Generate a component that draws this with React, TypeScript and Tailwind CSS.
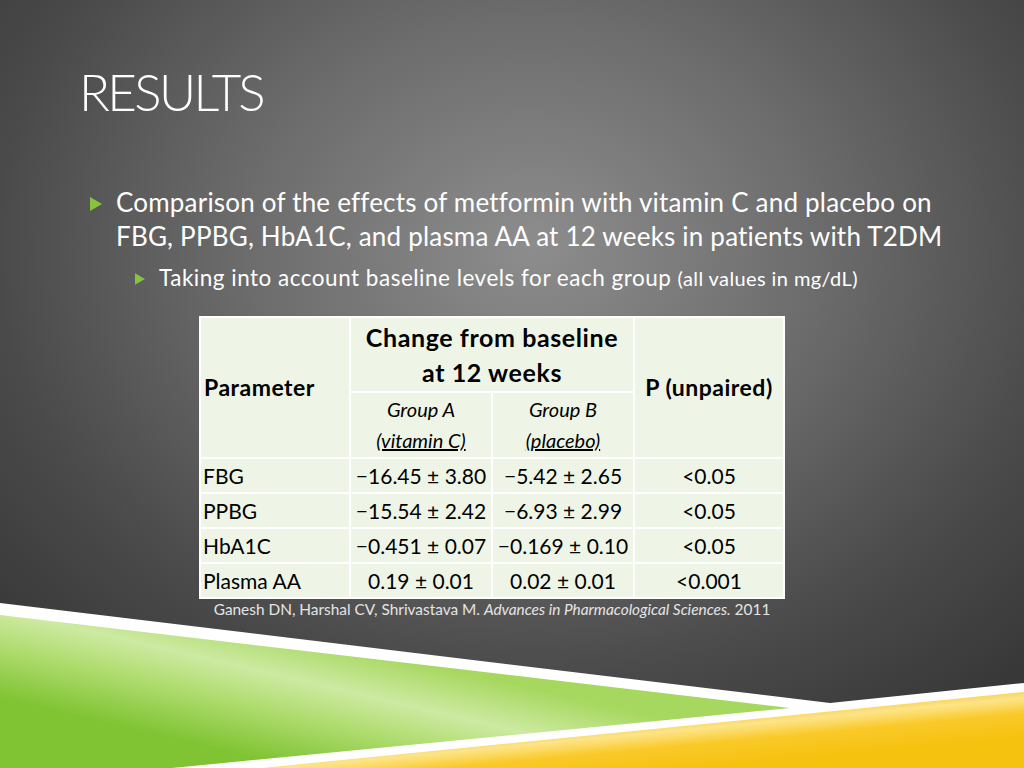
import React from 'react';

const font = { fontFamily: 'Lato, "Open Sans", sans-serif' };

const rows = [
  { name: 'FBG', a: '−16.45 ± 3.80', b: '−5.42 ± 2.65', p: '<0.05' },
  { name: 'PPBG', a: '−15.54 ± 2.42', b: '−6.93 ± 2.99', p: '<0.05' },
  { name: 'HbA1C', a: '−0.451 ± 0.07', b: '−0.169 ± 0.10', p: '<0.05' },
  { name: 'Plasma AA', a: '0.19 ± 0.01', b: '0.02 ± 0.01', p: '<0.001' },
];

const Arrow: React.FC<{ size: number }> = ({ size }) => (
  <svg width={size} height={size + 2} viewBox="0 0 12 14" className="shrink-0">
    <polygon points="0,0 12,7 0,14" fill="#86c440" />
  </svg>
);

// decorative stripes along the bottom edge
const BottomWaves: React.FC = () => (
  <svg className="absolute left-0 top-0 pointer-events-none" width="1024" height="768" viewBox="0 0 1024 768">
    <defs>
      <linearGradient id="green" gradientUnits="userSpaceOnUse" x1="330" y1="640" x2="300" y2="768">
        <stop offset="0" stopColor="#a6d75e" />
        <stop offset="0.35" stopColor="#cdeaa2" />
        <stop offset="0.6" stopColor="#b2dd73" />
        <stop offset="1" stopColor="#80c433" />
      </linearGradient>
      <linearGradient id="yellow" gradientUnits="userSpaceOnUse" x1="700" y1="715" x2="705" y2="768">
        <stop offset="0" stopColor="#f8c51f" />
        <stop offset="0.25" stopColor="#fde48a" />
        <stop offset="0.55" stopColor="#f9c928" />
        <stop offset="1" stopColor="#f6c210" />
      </linearGradient>
    </defs>
    <polygon points="0,603 830,703 1024,683 1024,768 0,768" fill="#ffffff" />
    <polygon points="0,615 790,708 172,768 0,768" fill="url(#green)" />
    <polygon points="262,768 1024,692 1024,768" fill="url(#yellow)" />
  </svg>
);

const cell = 'border-2 border-white';

const App: React.FC = () => {
  return (
    <div
      className="relative w-[1024px] h-[768px] overflow-hidden bg-[radial-gradient(ellipse_70%_75%_at_52%_32%,#8d8d8d_0%,#6c6c6c_40%,#4a4a4a_75%,#383838_100%)] text-white"
      style={font}
    >
      <BottomWaves />
      <div className="relative flex flex-col">
        <h1 className="ml-[79px] mt-[62px] text-[51px] leading-[60px] font-light tracking-[-2.6px]">RESULTS</h1>

        <div className="mt-[63px] ml-[90px] flex items-start gap-[14px]">
          <div className="mt-[12px]"><Arrow size={12} /></div>
          <p className="text-[26px] leading-[34px] tracking-[0.2px] whitespace-nowrap">
            Comparison of the effects of metformin with vitamin C and placebo on<br />
            FBG, PPBG, HbA1C, and plasma AA at 12 weeks in patients with T2DM
          </p>
        </div>

        <div className="mt-[10px] ml-[135px] flex items-start gap-[14px]">
          <div className="mt-[10px]"><Arrow size={10} /></div>
          <p className="text-[22.5px] leading-[30px] tracking-[0.5px] whitespace-nowrap">
            Taking into account baseline levels for each group <span className="text-[20px] tracking-[0.4px]">(all values in mg/dL)</span>
          </p>
        </div>

        <div className="ml-[200px] mt-[23px] w-[584px] flex flex-col items-center">
          <table className="w-[584px] border-collapse bg-[#eef5e7] text-black table-fixed">
            <colgroup>
              <col className="w-[150px]" />
              <col className="w-[142px]" />
              <col className="w-[142px]" />
              <col className="w-[150px]" />
            </colgroup>
            <tbody>
              <tr className="h-[75px]">
                <td rowSpan={2} className={`${cell} px-[3px] text-[23px] tracking-[0.5px] font-bold`}>Parameter</td>
                <td colSpan={2} className={`${cell} text-center text-[25px] leading-[35px] tracking-[0.6px] font-bold`}>
                  Change from baseline<br />at 12 weeks
                </td>
                <td rowSpan={2} className={`${cell} text-center text-[23px] tracking-[0.5px] font-bold`}>P (unpaired)</td>
              </tr>
              <tr className="h-[66px]">
                <td className={`${cell} text-center text-[20px] leading-[31px] italic`}>
                  Group A<br /><span className="underline">(vitamin C)</span>
                </td>
                <td className={`${cell} text-center text-[20px] leading-[31px] italic`}>
                  Group B<br /><span className="underline">(placebo)</span>
                </td>
              </tr>
              {rows.map(r => (
                <tr key={r.name} className="h-[35px] text-[21px]">
                  <td className={`${cell} px-[2px]`}>{r.name}</td>
                  <td className={`${cell} text-center whitespace-nowrap`}>{r.a}</td>
                  <td className={`${cell} text-center whitespace-nowrap`}>{r.b}</td>
                  <td className={`${cell} text-center`}>{r.p}</td>
                </tr>
              ))}
            </tbody>
          </table>
          <p className="mt-[0px] text-[15.4px] leading-[20px] text-[#e4e4e4] whitespace-nowrap">
            Ganesh DN, Harshal CV, Shrivastava M. <span className="italic">Advances in Pharmacological Sciences.</span> 2011
          </p>
        </div>
      </div>
    </div>
  );
};

export default App;
